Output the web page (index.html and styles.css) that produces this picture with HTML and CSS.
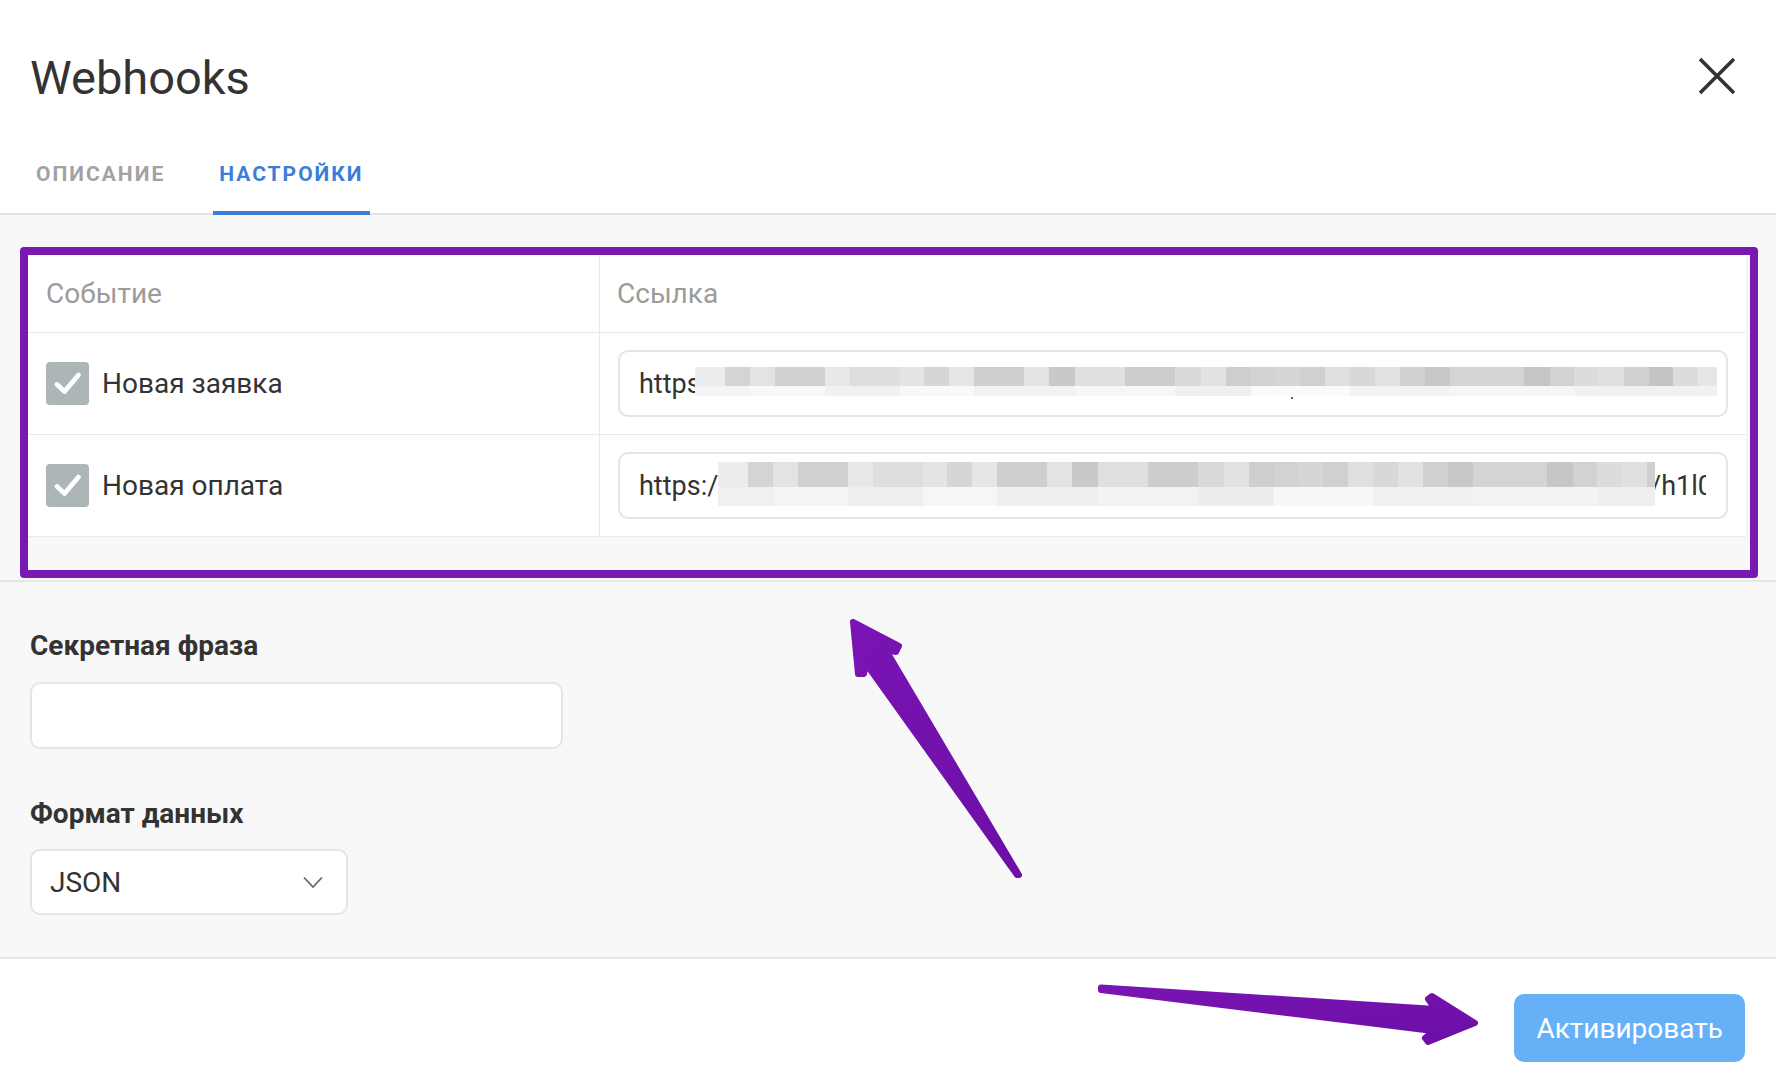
FILE: index.html
```html
<!DOCTYPE html>
<html lang="ru">
<head>
<meta charset="utf-8">
<title>Webhooks</title>
<link rel="stylesheet" href="styles.css">
</head>
<body>
<div class="modal">
  <header class="modal-header">
    <h1 class="modal-title">Webhooks</h1>
    <button class="close-btn" aria-label="Закрыть">
      <svg width="36" height="36" viewBox="0 0 36 36"><path d="M1 1 L35 35 M35 1 L1 35" stroke="#333" stroke-width="3.6" fill="none"/></svg>
    </button>
  </header>

  <nav class="tabs">
    <div class="tab">ОПИСАНИЕ</div>
    <div class="tab active">НАСТРОЙКИ</div>
  </nav>

  <main class="content">
    <section class="events">
      <div class="table">
        <div class="tr th">
          <div class="td">Событие</div>
          <div class="td">Ссылка</div>
        </div>
        <div class="tr">
          <div class="td">
            <span class="checkbox"><svg width="43" height="43" viewBox="0 0 43 43"><polyline points="11,22.5 18.5,29.5 32.5,13" fill="none" stroke="#fff" stroke-width="4.8" stroke-linecap="round" stroke-linejoin="round"/></svg></span>
            <span class="event-name">Новая заявка</span>
          </div>
          <div class="td">
            <div class="url-input">
              <span class="url-text">https://</span>
              <div class="mosaic mosaic-1"><div class="band-top"></div><div class="band-bottom"></div><span class="speck"></span></div>
            </div>
          </div>
        </div>
        <div class="tr">
          <div class="td">
            <span class="checkbox"><svg width="43" height="43" viewBox="0 0 43 43"><polyline points="11,22.5 18.5,29.5 32.5,13" fill="none" stroke="#fff" stroke-width="4.8" stroke-linecap="round" stroke-linejoin="round"/></svg></span>
            <span class="event-name">Новая оплата</span>
          </div>
          <div class="td">
            <div class="url-input">
              <span class="url-text">https:/</span>
              <span class="url-tail">/h1l0x9</span>
              <div class="mosaic mosaic-2"><div class="band-top"></div><div class="band-bottom"></div></div>
            </div>
          </div>
        </div>
      </div>
    </section>

    <section class="form">
      <label class="field-label">Секретная фраза</label>
      <div class="text-input"></div>
      <label class="field-label second">Формат данных</label>
      <div class="select">
        <span>JSON</span>
        <svg width="20" height="13" viewBox="0 0 20 13"><polyline points="1,1.5 10,11 19,1.5" fill="none" stroke="#666" stroke-width="1.8"/></svg>
      </div>
    </section>
  </main>

  <footer class="footer">
    <button class="btn-primary">Активировать</button>
  </footer>
</div>

<div class="highlight"></div>

<svg class="annotations" width="1776" height="1088" viewBox="0 0 1776 1088">
  <defs>
    <linearGradient id="ag" x1="0" y1="0" x2="1" y2="1">
      <stop offset="0" stop-color="#7a14b4"/>
      <stop offset="1" stop-color="#6c0fa6"/>
    </linearGradient>
  </defs>
  <polygon points="853,622 899,646 896,652 886,650 1019,875 1017,875 866,664 864,674 858,674"
           fill="url(#ag)" stroke="url(#ag)" stroke-width="6" stroke-linejoin="round"/>
  <polygon points="1101,987.5 1435,1009 1428,999 1432,996 1475,1023 1428,1042 1425,1038 1433,1031 1101,990"
           fill="url(#ag)" stroke="url(#ag)" stroke-width="6" stroke-linejoin="round"/>
</svg>
</body>
</html>
```

FILE: styles.css
```css
* {
  box-sizing: border-box;
}

html, body {
  margin: 0;
  padding: 0;
  height: 1088px;
  overflow: hidden;
  background: #ffffff;
}

body {
  font-family: Roboto, "Liberation Sans", Arial, sans-serif;
  color: #333333;
  position: relative;
}

.modal {
  width: 1776px;
  display: flex;
  flex-direction: column;
}

/* Header */
.modal-header {
  display: flex;
  align-items: center;
  justify-content: space-between;
  padding: 50px 41px 0 30px;
}

.modal-title {
  margin: 0;
  font-size: 47px;
  line-height: 56px;
  font-weight: 400;
  color: #333333;
}

.close-btn {
  border: none;
  background: none;
  padding: 0;
  margin-top: -4px;
  width: 36px;
  height: 36px;
  display: block;
}

.close-btn svg {
  display: block;
}

/* Tabs */
.tabs {
  display: flex;
  gap: 42px;
  padding-left: 30px;
  margin-top: 36px;
  border-bottom: 2px solid #e3e3e3;
}

.tab {
  padding: 20px 6px 25px;
  font-size: 21px;
  line-height: 24px;
  font-weight: 700;
  letter-spacing: 2px;
  color: #a2a2a2;
  border-bottom: 4px solid transparent;
  margin-bottom: -2px;
}

.tab.active {
  color: #3b7dd8;
  border-bottom-color: #3b7dd8;
}

/* Content */
.content {
  background: #f8f8f8;
}

.events {
  padding: 40px 30px 43px 28px;
  border-bottom: 2px solid #e6e6e6;
}

.table {
  background: #ffffff;
}

.tr {
  display: grid;
  grid-template-columns: 572px 1fr;
  height: 102px;
  border-bottom: 1px solid #e9e9e9;
}

.tr.th {
  height: 78px;
  font-size: 28px;
  color: #9b9b9b;
}

.td {
  display: flex;
  align-items: center;
  padding: 0 18px;
}

.td:first-child {
  border-right: 1px solid #e9e9e9;
}

.th .td:last-child {
  padding-left: 17px;
}

.checkbox {
  width: 43px;
  height: 43px;
  border-radius: 4px;
  background: #adb6b6;
  flex: none;
  display: block;
}

.checkbox svg {
  display: block;
}

.event-name {
  margin-left: 13px;
  font-size: 28px;
  color: #333333;
}

.url-input {
  position: relative;
  width: 100%;
  height: 67px;
  border: 2px solid #e4e4e4;
  border-radius: 10px;
  background: #ffffff;
  display: flex;
  align-items: center;
  padding: 0 20px 0 19px;
  font-size: 27px;
  color: #333333;
  white-space: nowrap;
  overflow: hidden;
}

.url-text {
  flex: none;
}

.url-tail {
  margin-left: auto;
  width: 56px;
  overflow: hidden;
  flex: none;
}

.mosaic {
  position: absolute;
  display: flex;
  flex-direction: column;
}

.mosaic-1 {
  left: 75px;
  top: 15px;
  width: 1022px;
}

.mosaic-2 {
  left: 98px;
  top: 8px;
  width: 937px;
}

.speck {
  position: absolute;
  left: 596px;
  top: 30px;
  width: 2px;
  height: 2px;
  background: #555555;
}

.mosaic .band-top {
  height: 19px;
  background: linear-gradient(to right,
    #ececec 0 30px, #d4d4d4 30px 55px, #e3e3e3 55px 80px, #d0d0d0 80px 130px,
    #e8e8e8 130px 155px, #dedede 155px 205px, #e4e4e4 205px 229px, #d6d6d6 229px 254px,
    #e6e6e6 254px 279px, #cfcfcf 279px 329px, #e3e3e3 329px 354px, #c9c9c9 354px 380px,
    #e0e0e0 380px 430px, #cdcdcd 430px 480px, #dadada 480px 506px, #e2e2e2 506px 531px,
    #cecece 531px 556px, #d2d2d2 556px 581px, #d6d6d6 581px 605px, #d0d0d0 605px 630px,
    #e0e0e0 630px 655px, #d8d8d8 655px 680px, #e2e2e2 680px 705px, #d0d0d0 705px 730px,
    #c8c8c8 730px 755px, #d4d4d4 755px 829px, #c6c6c6 829px 855px, #d2d2d2 855px 879px,
    #dcdcdc 879px 904px, #e0e0e0 904px 929px, #d0d0d0 929px 954px, #c4c4c4 954px 978px,
    #dcdcdc 978px 1003px, #e6e6e6 1003px 1022px);
}

.mosaic .band-bottom {
  height: 10px;
  background: linear-gradient(to right,
    #f4f4f4 0 55px, #f8f8f8 55px 130px, #f1f1f1 130px 205px, #f9f9f9 205px 279px,
    #f2f2f2 279px 380px, #f7f7f7 380px 480px, #f0f0f0 480px 556px, #fafafa 556px 655px,
    #f3f3f3 655px 755px, #f6f6f6 755px 880px, #f1f1f1 880px 1022px);
}

.mosaic-2 .band-top {
  height: 25px;
}

.mosaic-2 .band-bottom {
  height: 19px;
  background: linear-gradient(to right,
    #f0f0f0 0 55px, #f4f4f4 55px 130px, #eeeeee 130px 205px, #f6f6f6 205px 279px,
    #efefef 279px 380px, #f3f3f3 380px 480px, #ededed 480px 556px, #f7f7f7 556px 655px,
    #f0f0f0 655px 755px, #f3f3f3 755px 880px, #eeeeee 880px 1022px);
}

/* Form */
.form {
  display: flex;
  flex-direction: column;
  align-items: flex-start;
  padding: 48px 30px 42px;
  border-bottom: 2px solid #e6e6e6;
}

.field-label {
  font-size: 28px;
  line-height: 32px;
  font-weight: 700;
  color: #333333;
  margin-bottom: 20px;
}

.field-label.second {
  margin-top: 49px;
  margin-bottom: 19px;
}

.text-input {
  width: 533px;
  height: 67px;
  border: 2px solid #e4e4e4;
  border-radius: 10px;
  background: #ffffff;
}

.select {
  width: 318px;
  height: 66px;
  border: 2px solid #e4e4e4;
  border-radius: 10px;
  background: #ffffff;
  display: flex;
  align-items: center;
  justify-content: space-between;
  padding: 0 23px 0 18px;
  font-size: 28px;
  color: #333333;
}

.select svg {
  display: block;
}

/* Footer */
.footer {
  display: flex;
  justify-content: flex-end;
  padding: 35px 31px 0 0;
  height: 129px;
  background: #ffffff;
}

.btn-primary {
  height: 68px;
  padding: 0 22px;
  border: none;
  border-radius: 10px;
  background: #66b0f7;
  color: #ffffff;
  font-family: Roboto, "Liberation Sans", Arial, sans-serif;
  font-size: 28px;
  font-weight: 400;
}

/* Annotations */
.highlight {
  position: absolute;
  left: 20px;
  top: 247px;
  width: 1738px;
  height: 331px;
  border: 8px solid #7a19b2;
  border-radius: 4px;
  pointer-events: none;
}

.annotations {
  position: absolute;
  left: 0;
  top: 0;
  pointer-events: none;
}
```
